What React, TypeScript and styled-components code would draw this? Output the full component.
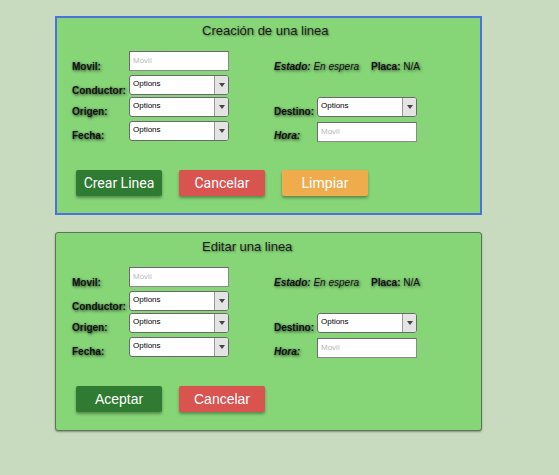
import React from "react";
import styled, { createGlobalStyle, css } from "styled-components";

const Global = createGlobalStyle`
  html, body { margin: 0; padding: 0; }
  body {
    background: #c9dbbf;
    font-family: "Liberation Sans", Arial, sans-serif;
    width: 559px;
    height: 475px;
    overflow: hidden;
  }
`;

const Page = styled.div`
  display: flex;
  flex-direction: column;
  gap: 17px;
  padding: 16px 0 0 55px;
`;

const Panel = styled.section<{ $variant: "blue" | "plain" }>`
  box-sizing: border-box;
  width: 427px;
  height: 199px;
  background: #86d577;
  display: flex;
  flex-direction: column;
  ${(p) =>
    p.$variant === "blue"
      ? css`
          border: 2px solid #4e70dd;
          padding: 0 0 0 15px;
        `
      : css`
          border: 1px solid #5d735a;
          border-radius: 3px;
          box-shadow: 0 1px 2px rgba(0, 0, 0, 0.35);
          padding: 1px 0 0 16px;
        `}
`;

const Title = styled.h2`
  margin: 5px 0 0 130px;
  font-size: 13px;
  font-weight: normal;
  line-height: 15px;
  text-align: left;
  color: #1d1d1d;
  text-shadow: 1px 1px 2px rgba(0, 0, 0, 0.4);
`;

const Form = styled.div`
  margin-top: 13px;
  display: grid;
  grid-template-columns: 57px 100px 45px 43px 100px;
  grid-template-rows: 24px 22px 24px 20px;
`;

const Label = styled.span<{ $italic?: boolean; $col?: number; $drop?: number }>`
  grid-column: ${(p) => p.$col ?? 1};
  align-self: start;
  margin-top: ${(p) => p.$drop ?? 10}px;
  font-size: 10px;
  line-height: 12px;
  font-weight: bold;
  font-style: ${(p) => (p.$italic ? "italic" : "normal")};
  color: #111;
  white-space: nowrap;
  text-shadow: 1px 1px 3px rgba(0, 0, 0, 0.8);
`;

const Status = styled.div`
  grid-column: 4 / span 2;
  align-self: start;
  margin-top: 10px;
  display: flex;
  gap: 12px;
  font-size: 10px;
  line-height: 12px;
  color: #111;
  white-space: nowrap;
  text-shadow: 1px 1px 3px rgba(0, 0, 0, 0.65);
`;

const StatusItem = styled.span<{ $italic?: boolean }>`
  font-style: ${(p) => (p.$italic ? "italic" : "normal")};
  b { font-weight: bold; }
`;

const TextInput = styled.div<{ $col?: number; $nudge?: number }>`
  grid-column: ${(p) => p.$col ?? 2};
  box-sizing: border-box;
  width: 100px;
  height: 20px;
  align-self: start;
  margin-top: ${(p) => p.$nudge ?? 0}px;
  background: #fff;
  border: 1px solid #8a8a8a;
  border-top-color: #6c6c6c;
  border-left-color: #6c6c6c;
  font-size: 8px;
  line-height: 18px;
  padding-left: 3px;
  color: #b9b9b9;
`;

const Select = styled.div<{ $col?: number }>`
  grid-column: ${(p) => p.$col ?? 2};
  box-sizing: border-box;
  width: 100px;
  height: 20px;
  align-self: start;
  display: flex;
  background: #fff;
  border: 1px solid #6a6a6a;
  border-radius: 3px;
  overflow: hidden;
`;

const SelectValue = styled.span`
  flex: 1;
  font-size: 8px;
  line-height: 16px;
  padding-left: 3px;
  color: #000;
`;

const SelectArrow = styled.span`
  width: 13px;
  border-left: 1px solid #9a9a9a;
  background: #e4e4e4;
  display: flex;
  align-items: center;
  justify-content: center;
  &::after {
    content: "";
    border-left: 3px solid transparent;
    border-right: 3px solid transparent;
    border-top: 4px solid #444;
  }
`;

const Buttons = styled.div`
  margin-top: 29px;
  margin-left: 4px;
  display: flex;
  gap: 17px;
`;

const tones = {
  green: "#2e7b31",
  red: "#d9534f",
  orange: "#efac4d",
};

const Button = styled.button<{ $tone: keyof typeof tones; $font: "roboto" | "arial" }>`
  box-sizing: border-box;
  width: 86px;
  height: 26px;
  border: none;
  border-radius: 2px;
  background: ${(p) => tones[p.$tone]};
  color: #fff;
  font-size: 14px;
  font-family: ${(p) =>
    p.$font === "roboto" ? "Roboto, sans-serif" : '"Liberation Sans", Arial, sans-serif'};
  box-shadow: 0 2px 3px rgba(0, 0, 0, 0.35);
  padding: 0;
  cursor: pointer;
`;

function LineForm() {
  return (
    <Form>
      <Label>Movil:</Label>
      <TextInput>Movil</TextInput>
      <Status>
        <StatusItem $italic>
          <b>Estado:</b> En espera
        </StatusItem>
        <StatusItem>
          <b>Placa:</b> N/A
        </StatusItem>
      </Status>

      <Label>Conductor:</Label>
      <Select>
        <SelectValue>Options</SelectValue>
        <SelectArrow />
      </Select>

      <Label $drop={9}>Origen:</Label>
      <Select>
        <SelectValue>Options</SelectValue>
        <SelectArrow />
      </Select>
      <Label $col={4} $drop={9}>
        Destino:
      </Label>
      <Select $col={5}>
        <SelectValue>Options</SelectValue>
        <SelectArrow />
      </Select>

      <Label $drop={9}>Fecha:</Label>
      <Select>
        <SelectValue>Options</SelectValue>
        <SelectArrow />
      </Select>
      <Label $col={4} $italic $drop={9}>
        Hora:
      </Label>
      <TextInput $col={5} $nudge={1}>
        Movil
      </TextInput>
    </Form>
  );
}

export default function App() {
  return (
    <>
      <Global />
      <Page>
        <Panel $variant="blue">
          <Title>Creación de una linea</Title>
          <LineForm />
          <Buttons>
            <Button $tone="green" $font="roboto">Crear Linea</Button>
            <Button $tone="red" $font="roboto">Cancelar</Button>
            <Button $tone="orange" $font="roboto">Limpiar</Button>
          </Buttons>
        </Panel>
        <Panel $variant="plain">
          <Title>Editar una linea</Title>
          <LineForm />
          <Buttons>
            <Button $tone="green" $font="arial">Aceptar</Button>
            <Button $tone="red" $font="arial">Cancelar</Button>
          </Buttons>
        </Panel>
      </Page>
    </>
  );
}
